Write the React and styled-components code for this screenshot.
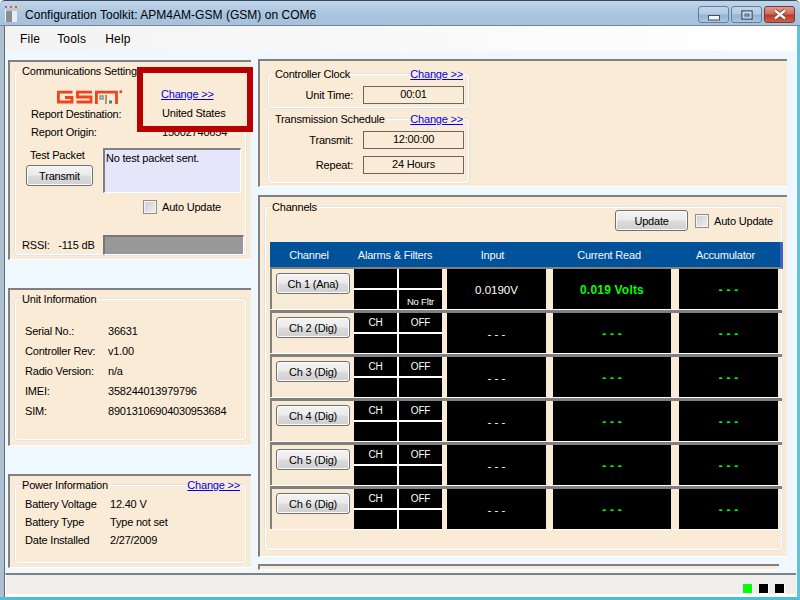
import React from 'react';
import styled, { createGlobalStyle } from 'styled-components';

const Global = createGlobalStyle`
  html, body { margin: 0; padding: 0; background: #fff; }
  * { box-sizing: border-box; }
  body { font-family: "Liberation Sans", Arial, sans-serif; font-size: 11px; letter-spacing: -0.2px; color: #000; overflow: hidden; }
`;

const channels = [
  { name: 'Ch 1 (Ana)', alarms: ['', '', '', 'No Fltr'], input: '0.0190V', read: '0.019 Volts', total: '- - -' },
  { name: 'Ch 2 (Dig)', alarms: ['CH', 'OFF', '', ''], input: '- - -', read: '- - -', total: '- - -' },
  { name: 'Ch 3 (Dig)', alarms: ['CH', 'OFF', '', ''], input: '- - -', read: '- - -', total: '- - -' },
  { name: 'Ch 4 (Dig)', alarms: ['CH', 'OFF', '', ''], input: '- - -', read: '- - -', total: '- - -' },
  { name: 'Ch 5 (Dig)', alarms: ['CH', 'OFF', '', ''], input: '- - -', read: '- - -', total: '- - -' },
  { name: 'Ch 6 (Dig)', alarms: ['CH', 'OFF', '', ''], input: '- - -', read: '- - -', total: '- - -' },
];

const unitInfo = [
  ['Serial No.:', '36631'],
  ['Controller Rev:', 'v1.00'],
  ['Radio Version:', 'n/a'],
  ['IMEI:', '358244013979796'],
  ['SIM:', '89013106904030953684'],
];

const powerInfo = [
  ['Battery Voltage', '12.40 V'],
  ['Battery Type', 'Type not set'],
  ['Date Installed', '2/27/2009'],
];

const Window = styled.div`
  width: 800px;
  height: 600px;
  display: flex;
  flex-direction: column;
  overflow: hidden;
  background: #b3cbe3;
  border-top: 1px solid #39485a;
  border-radius: 5px 5px 0 0;
`;

const TitleBar = styled.div`
  height: 25px;
  flex: none;
  display: flex;
  align-items: center;
  padding: 3px 5px 0 5px;
  background: linear-gradient(#c0d5ea, #a9c4df 55%, #a6c1dc);
  border-bottom: 1px solid #76879a;
`;

const TitleText = styled.div`
  margin-left: 3px;
  font-size: 12px;
  letter-spacing: 0.03px;
  flex: 1;
`;

const WinButton = styled.div`
  width: ${p => p.$w || 31}px;
  height: 17px;
  margin-left: ${p => p.$ml || 2}px;
  display: flex;
  align-items: center;
  justify-content: center;
  border: 1px solid ${p => (p.$close ? '#7c3a35' : '#62809c')};
  border-radius: 3px;
  background: ${p =>
    p.$close
      ? 'linear-gradient(#dd9a90, #cf6a5c 48%, #b83a26 52%, #c8604c)'
      : 'linear-gradient(#c3d6e9, #b1c9e1 48%, #94b3d1 52%, #a9c5df)'};
`;

const Frame = styled.div`
  flex: 1;
  min-height: 0;
  display: flex;
  padding-left: 4px;
  background: #aebfd0;
  border-right: 3px solid #5cc4dc;
  border-bottom: 3px solid #4fbcd8;
`;

const Client = styled.div`
  flex: 1;
  min-width: 0;
  display: flex;
  flex-direction: column;
  background: #f0f8ff;
  border-left: 1px solid #5f6b76;
  border-right: 1px solid #fff;
`;

const MenuBar = styled.div`
  height: 25px;
  flex: none;
  display: flex;
  align-items: center;
  padding: 0 0 0 15px;
  background: linear-gradient(90deg, #f3f3f3, #fafafa 60%, #fff);
`;

const MenuItem = styled.div`
  font-size: 12px;
  letter-spacing: 0.2px;
  margin-right: ${p => p.$mr}px;
`;

const Content = styled.div`
  flex: 1;
  min-height: 0;
  display: flex;
  padding: 8px 0 0 3px;
  overflow: hidden;
`;

const LeftColumn = styled.div`
  width: 243px;
  flex: none;
  padding-top: 1px;
  display: flex;
  flex-direction: column;
`;

const RightColumn = styled.div`
  width: 529px;
  flex: none;
  margin-left: 7px;
  display: flex;
  flex-direction: column;
`;

const Panel = styled.div`
  position: relative;
  height: ${p => p.$h}px;
  margin-top: ${p => p.$mt || 0}px;
  width: ${p => p.$w || '100%'};
  flex: none;
  background: #faebd7;
  border-top: 2px solid #808080;
  border-left: 2px solid #808080;
  padding: ${p => p.$pad || '8px 4px 4px 4px'};
  border-bottom: 1px solid #fff;
  display: flex;
  flex-direction: column;
  overflow: ${p => (p.$clip ? 'hidden' : 'visible')};
`;

const Group = styled.div`
  flex: ${p => (p.$h ? 'none' : 1)};
  width: ${p => (p.$w ? `${p.$w}px` : 'auto')};
  height: ${p => (p.$h ? `${p.$h}px` : 'auto')};
  margin-top: ${p => p.$mt || 0}px;
  border: 1px solid #dde5ea;
  border-radius: 4px;
  box-shadow: inset 0 0 0 1px #fff;
  display: flex;
  flex-direction: column;
`;

const LegendRow = styled.div`
  height: 14px;
  margin: -7px 6px 0 6px;
  flex: none;
  display: flex;
  justify-content: space-between;
  align-items: center;
`;

const Legend = styled.span`
  background: #faebd7;
  padding: 0 1px;
  white-space: nowrap;
`;

const ChangeLink = styled.a`
  background: #faebd7;
  color: #0000ee;
  text-decoration: underline;
  white-space: nowrap;
  cursor: pointer;
`;

const Logo = styled.svg`
  display: block;
  margin: 12px 0 1px 42px;
  flex: none;
`;

const FieldRow = styled.div`
  height: ${p => p.$h}px;
  flex: none;
  display: flex;
  align-items: center;
  padding-left: ${p => p.$pl}px;
  white-space: nowrap;
`;

const FieldLabel = styled.span`
  width: ${p => p.$w}px;
  flex: none;
`;

const Highlight = styled.div`
  position: absolute;
  left: 127px;
  top: 5px;
  width: 116px;
  height: 65px;
  border: 6px solid #b80000;
  background: #faebd7;
  padding: 15px 0 0 18px;
  display: flex;
  flex-direction: column;
  gap: 7px;
`;

const HighlightText = styled.span`
  padding-left: 1px;
  height: 14px;
`;

const TestRow = styled.div`
  display: flex;
  margin-top: 7px;
  padding-left: 11px;
  flex: none;
`;

const TestLeft = styled.div`
  width: 77px;
  flex: none;
  display: flex;
  flex-direction: column;
  align-items: flex-start;
`;

const TestLabel = styled.div`
  margin: 0 0 4px 4px;
  height: 13px;
  display: flex;
  align-items: center;
`;

const Button = styled.button`
  width: ${p => p.$w}px;
  height: ${p => p.$h}px;
  flex: none;
  padding: 0;
  font: inherit;
  letter-spacing: inherit;
  color: #000;
  border: 1px solid #707070;
  border-radius: 3px;
  box-shadow: inset 0 0 0 1px #fbfbfb;
  background: linear-gradient(#f3f3f3, #ebebeb 48%, #dcdcdc 52%, #cfcfcf);
  margin: ${p => p.$m || 0};
`;

const TestOutput = styled.div`
  width: 138px;
  height: 45px;
  background: #e6e6fa;
  border-top: 2px solid #808080;
  border-left: 2px solid #808080;
  border-right: 1px solid #fff;
  border-bottom: 1px solid #fff;
  padding: 2px 1px;
`;

const CheckRow = styled.label`
  display: flex;
  align-items: center;
  gap: 5px;
  margin: ${p => p.$m || 0};
  flex: none;
`;

const CheckBox = styled.span`
  width: 14px;
  height: 14px;
  flex: none;
  border: 1px solid #8e8f8f;
  box-shadow: inset 0 0 0 1px #f4f4f4;
  background: linear-gradient(135deg, #cfcfcf, #eeeeee);
`;

const RssiRow = styled.div`
  display: flex;
  align-items: center;
  margin-top: 21px;
  padding-left: 7px;
  flex: none;
`;

const RssiLabel = styled.span`
  width: 81px;
  flex: none;
  white-space: pre;
`;

const RssiBar = styled.div`
  width: 141px;
  height: 20px;
  background: #999;
  border-top: 2px solid #777;
  border-left: 2px solid #777;
  border-right: 1px solid #fff;
  border-bottom: 1px solid #fff;
`;

const SmallRows = styled.div`
  margin-top: ${p => p.$mt}px;
  display: flex;
  flex-direction: column;
`;

const ScheduleRow = styled.div`
  display: flex;
  align-items: center;
  height: ${p => p.$h}px;
  flex: none;
`;

const ScheduleLabel = styled.div`
  width: 85px;
  flex: none;
  text-align: right;
`;

const ScheduleValue = styled.div`
  width: 101px;
  height: 18px;
  margin-left: 10px;
  border: 1.5px solid #666;
  text-align: center;
  line-height: 15px;
`;

const ChannelTools = styled.div`
  display: flex;
  align-items: center;
  justify-content: flex-end;
  padding-right: 9px;
  margin-top: -4px;
  flex: none;
`;

const Table = styled.div`
  margin: 11px 0 0 5px;
  width: 513px;
  display: flex;
  flex-direction: column;
`;

const Header = styled.div`
  height: 27px;
  display: flex;
  align-items: center;
  background: #00529b;
  border-right: 3px solid #3f5fd0;
  border-bottom: 2px solid #808080;
  color: #f4f8ff;
`;

const HeadCell = styled.div`
  width: ${p => p.$w}px;
  flex: none;
  text-align: center;
`;

const Row = styled.div`
  width: 512px;
  height: ${p => (p.$last ? 41 : 44)}px;
  display: flex;
  border-bottom: ${p => (p.$last ? '1px solid #fff' : '3px solid #808080')};
  box-shadow: ${p => (p.$last ? 'none' : 'inset 0 -1px 0 #fff')};
`;

const ChannelCell = styled.div`
  width: 83px;
  height: 40px;
  flex: none;
  border-left: 2px solid #808080;
  padding: 4px 0 0 4px;
`;

const AlarmGrid = styled.div`
  width: 88px;
  height: 40px;
  margin-left: 1px;
  flex: none;
  display: grid;
  grid-template-columns: 43px 43px;
  grid-template-rows: 19px 19px;
  gap: 2px;
  background: #fff;
`;

const AlarmCell = styled.div`
  background: #000;
  color: #fff;
  font-size: ${p => (p.$small ? 9.5 : 10)}px;
  display: flex;
  align-items: ${p => (p.$small ? 'flex-end' : 'center')};
  justify-content: center;
  padding: ${p => (p.$small ? '0 0 2px 0' : '0 0 1px 0')};
`;

const Readout = styled.div`
  width: ${p => p.$w}px;
  height: 40px;
  margin-left: ${p => p.$ml}px;
  padding-top: 1px;
  flex: none;
  background: #000;
  color: ${p => (p.$green ? '#00ff00' : '#fff')};
  font-weight: ${p => (p.$green ? 700 : 400)};
  font-size: ${p => (p.$green ? 12 : 11.5)}px;
  letter-spacing: ${p => (p.$green ? 0.2 : 0)}px;
  display: flex;
  align-items: center;
  justify-content: center;
  white-space: pre;
`;

const StatusBar = styled.div`
  height: 21px;
  flex: none;
  display: flex;
  align-items: flex-end;
  justify-content: flex-end;
  gap: 7px;
  padding: 0 12px 1px 0;
  border-top: 2px solid #808080;
  border-left: 1px solid #fff;
  background: #f0eded;
`;

const Lamp = styled.span`
  width: 9px;
  height: 9px;
  background: ${p => p.$color};
  box-shadow: 1px 1px 0 #fff;
`;

const BottomEdge = styled.div`
  height: 3px;
  flex: none;
  background: #fff;
`;

const AppIcon = () => (
  <svg width="17" height="17" viewBox="0 0 17 17">
    <rect x="0" y="0" width="2" height="2" fill="#e040c0" />
    <rect x="2" y="0" width="2" height="2" fill="#f4e020" />
    <rect x="5" y="0" width="2" height="2" fill="#e040c0" />
    <rect x="7" y="0" width="2" height="2" fill="#f4e020" />
    <rect x="10" y="0" width="2" height="2" fill="#e040c0" />
    <rect x="12" y="0" width="2" height="2" fill="#f4e020" />
    <rect x="0" y="3" width="1" height="13" fill="#eef2f6" />
    <rect x="1" y="5" width="6" height="11" fill="#8d8d8d" />
    <rect x="7" y="5" width="5" height="11" fill="#e9eef3" />
  </svg>
);

const GsmLogo = () => (
  <Logo width="66" height="14" viewBox="0 0 66 14" fill="none" stroke="#f0421c" strokeWidth="2.8">
    <path d="M15.5 2.2H1.4V12H15V7.5H8" />
    <path d="M35 2.2H20.5V7H34V12H19.5" />
    <path d="M39.4 14V2.2H59.5V14" />
    <path d="M49 5V14" strokeWidth="1.6" stroke="#c86a4c" />
    <rect x="43" y="6" width="3" height="3" strokeWidth="1.4" stroke="#5c9a8c" />
    <rect x="52.5" y="11" width="2" height="2" strokeWidth="1" stroke="#2f8a80" />
    <rect x="62.5" y="0.4" width="2.6" height="2.6" fill="#f0421c" stroke="none" />
  </Logo>
);

const MinIcon = () => (
  <svg width="12" height="6" viewBox="0 0 12 6" style={{ marginTop: 7 }}>
    <rect x="0.5" y="0.5" width="11" height="4.5" fill="#f2f5f8" stroke="#43505e" />
  </svg>
);

const MaxIcon = () => (
  <svg width="12" height="10" viewBox="0 0 12 10">
    <rect x="1" y="1" width="10" height="8" fill="none" stroke="#3d4a58" strokeWidth="1.4" />
    <rect x="2" y="2" width="8" height="6" fill="none" stroke="#e8edf2" strokeWidth="0.8" />
    <rect x="4" y="4" width="4" height="2" fill="#8da6bf" stroke="#3d4a58" strokeWidth="0.6" />
  </svg>
);

const CloseIcon = () => (
  <svg width="14" height="11" viewBox="0 0 14 11">
    <path d="M2 1.5L12 9.5M12 1.5L2 9.5" stroke="#6e3a34" strokeWidth="4" />
    <path d="M2 1.5L12 9.5M12 1.5L2 9.5" stroke="#f6f3f2" strokeWidth="2.4" />
  </svg>
);

const AutoUpdate = ({ m }) => (
  <CheckRow $m={m}>
    <CheckBox />
    Auto Update
  </CheckRow>
);

const CommsPanel = () => (
  <Panel $h={200}>
    <Group>
      <LegendRow>
        <Legend>Communications Settings</Legend>
      </LegendRow>
      <GsmLogo />
      <FieldRow $h={18} $pl={16}>
        <FieldLabel $w={131}>Report Destination:</FieldLabel>
      </FieldRow>
      <FieldRow $h={18} $pl={16}>
        <FieldLabel $w={131}>Report Origin:</FieldLabel>
        15002740654
      </FieldRow>
      <TestRow>
        <TestLeft>
          <TestLabel>Test Packet</TestLabel>
          <Button $w={67} $h={21}>Transmit</Button>
        </TestLeft>
        <TestOutput>No test packet sent.</TestOutput>
      </TestRow>
      <AutoUpdate m="7px 0 0 128px" />
      <RssiRow>
        <RssiLabel>{'RSSI:   -115 dB'}</RssiLabel>
        <RssiBar />
      </RssiRow>
    </Group>
    <Highlight>
      <ChangeLink>Change &gt;&gt;</ChangeLink>
      <HighlightText>United States</HighlightText>
    </Highlight>
  </Panel>
);

const UnitPanel = () => (
  <Panel $h={158} $mt={28} $pad="8px 4px 4px 4px">
    <Group>
      <LegendRow>
        <Legend>Unit Information</Legend>
      </LegendRow>
      <SmallRows $mt={15}>
        {unitInfo.map(([label, value]) => (
          <FieldRow key={label} $h={20} $pl={10}>
            <FieldLabel $w={83}>{label}</FieldLabel>
            {value}
          </FieldRow>
        ))}
      </SmallRows>
    </Group>
  </Panel>
);

const PowerPanel = () => (
  <Panel $h={94} $mt={28} $pad="8px 4px 3px 4px">
    <Group>
      <LegendRow>
        <Legend>Power Information</Legend>
        <ChangeLink>Change &gt;&gt;</ChangeLink>
      </LegendRow>
      <SmallRows $mt={3}>
        {powerInfo.map(([label, value]) => (
          <FieldRow key={label} $h={18} $pl={10}>
            <FieldLabel $w={85}>{label}</FieldLabel>
            {value}
          </FieldRow>
        ))}
      </SmallRows>
    </Group>
  </Panel>
);

const SchedulePanel = () => (
  <Panel $h={128} $pad="12px 0 0 7px">
    <Group $w={203} $h={36}>
      <LegendRow>
        <Legend>Controller Clock</Legend>
        <ChangeLink>Change &gt;&gt;</ChangeLink>
      </LegendRow>
      <ScheduleRow $h={27}>
        <ScheduleLabel>Unit Time:</ScheduleLabel>
        <ScheduleValue>00:01</ScheduleValue>
      </ScheduleRow>
    </Group>
    <Group $w={203} $h={66} $mt={9}>
      <LegendRow>
        <Legend>Transmission Schedule</Legend>
        <ChangeLink>Change &gt;&gt;</ChangeLink>
      </LegendRow>
      <ScheduleRow $h={28}>
        <ScheduleLabel>Transmit:</ScheduleLabel>
        <ScheduleValue>12:00:00</ScheduleValue>
      </ScheduleRow>
      <ScheduleRow $h={22}>
        <ScheduleLabel>Repeat:</ScheduleLabel>
        <ScheduleValue>24 Hours</ScheduleValue>
      </ScheduleRow>
    </Group>
  </Panel>
);

const ChannelRow = ({ channel, last }) => (
  <Row $last={last}>
    <ChannelCell>
      <Button $w={74} $h={21}>{channel.name}</Button>
    </ChannelCell>
    <AlarmGrid>
      {channel.alarms.map((text, i) => (
        <AlarmCell key={i} $small={text === 'No Fltr'}>{text}</AlarmCell>
      ))}
    </AlarmGrid>
    <Readout $w={99} $ml={5}>{channel.input}</Readout>
    <Readout $w={118} $ml={7} $green>{channel.read}</Readout>
    <Readout $w={99} $ml={8} $green>{channel.total}</Readout>
  </Row>
);

const ChannelsPanel = () => (
  <Panel $h={362} $mt={8} $pad="9px 4px 5px 4px">
    <Group>
      <LegendRow>
        <Legend>Channels</Legend>
      </LegendRow>
      <ChannelTools>
        <Button $w={73} $h={21}>Update</Button>
        <AutoUpdate m="0 0 0 7px" />
      </ChannelTools>
      <Table>
        <Header>
          <HeadCell $w={78}>Channel</HeadCell>
          <HeadCell $w={94}>Alarms &amp; Filters</HeadCell>
          <HeadCell $w={101}>Input</HeadCell>
          <HeadCell $w={132}>Current Read</HeadCell>
          <HeadCell $w={101}>Accumulator</HeadCell>
        </Header>
        {channels.map((channel, i) => (
          <ChannelRow key={channel.name} channel={channel} last={i === channels.length - 1} />
        ))}
      </Table>
    </Group>
  </Panel>
);

export default function App() {
  return (
    <Window>
      <Global />
      <TitleBar>
        <AppIcon />
        <TitleText>Configuration Toolkit: APM4AM-GSM (GSM) on COM6</TitleText>
        <WinButton $w={31}><MinIcon /></WinButton>
        <WinButton $w={31}><MaxIcon /></WinButton>
        <WinButton $w={31} $close><CloseIcon /></WinButton>
      </TitleBar>
      <Frame>
        <Client>
          <MenuBar>
            <MenuItem $mr={17}>File</MenuItem>
            <MenuItem $mr={19}>Tools</MenuItem>
            <MenuItem>Help</MenuItem>
          </MenuBar>
          <Content>
            <LeftColumn>
              <CommsPanel />
              <UnitPanel />
              <PowerPanel />
            </LeftColumn>
            <RightColumn>
              <SchedulePanel />
              <ChannelsPanel />
              <Panel $h={6} $mt={7} $w="521px" $pad="0" $clip />
            </RightColumn>
          </Content>
          <StatusBar>
            <Lamp $color="#00ff00" />
            <Lamp $color="#000" />
            <Lamp $color="#000" />
          </StatusBar>
          <BottomEdge />
        </Client>
      </Frame>
    </Window>
  );
}
